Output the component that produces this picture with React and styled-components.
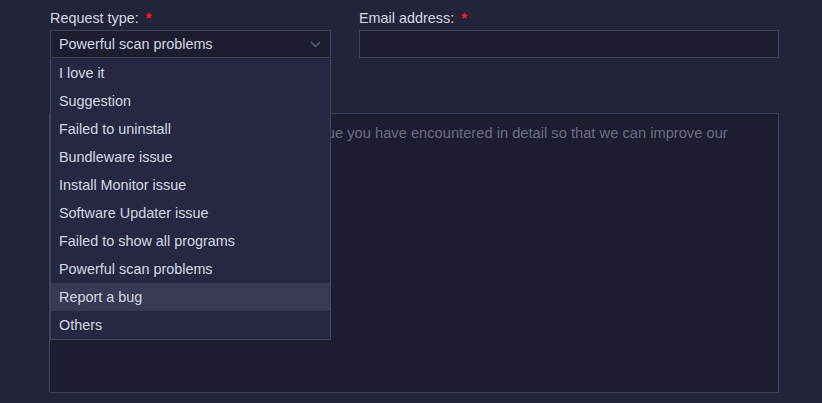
import React from "react";
import styled, { createGlobalStyle } from "styled-components";

const COLORS = {
  page: "#222439",
  field: "#1c1d2f",
  border: "#3e4059",
  menu: "#262843",
  menuBorder: "#44465f",
  hover: "#383a55",
  text: "#d6d8e2",
  placeholder: "#6c6e82",
  chevron: "#5f6278",
  required: "#ff1a1a",
};

const OPTIONS = [
  "I love it",
  "Suggestion",
  "Failed to uninstall",
  "Bundleware issue",
  "Install Monitor issue",
  "Software Updater issue",
  "Failed to show all programs",
  "Powerful scan problems",
  "Report a bug",
  "Others",
];

const GlobalStyle = createGlobalStyle`
  html, body {
    margin: 0;
    background: ${COLORS.page};
    font-family: "Liberation Sans", "DejaVu Sans", sans-serif;
    font-size: 14.4px;
    color: ${COLORS.text};
  }
`;

const Page = styled.div({
  width: 822,
  height: 403,
  overflow: "hidden",
  boxSizing: "border-box",
  padding: "9px 43px 0 49px",
});

const Row = styled.div({
  display: "grid",
  gridTemplateColumns: "281px 420px",
  columnGap: 28,
  paddingLeft: 1,
});

const Field = styled.div({
  position: "relative",
  display: "flex",
  flexDirection: "column",
});

const Label = styled.label`
  display: block;
  height: 18px;
  line-height: 18px;
  margin-bottom: 3px;
  padding-top: ${(p) => p.$offset || 0}px;
  margin-top: ${(p) => -(p.$offset || 0)}px;
  color: ${COLORS.text};
  white-space: nowrap;
`;

const Star = styled.span({
  color: COLORS.required,
  marginLeft: 7,
  fontWeight: 700,
});

const SelectBox = styled.div({
  height: 28,
  boxSizing: "border-box",
  border: `1px solid ${COLORS.border}`,
  background: COLORS.field,
  display: "flex",
  alignItems: "center",
  justifyContent: "space-between",
  padding: "0 9px 0 8px",
  svg: { color: COLORS.chevron },
});

const Input = styled.div({
  height: 28,
  boxSizing: "border-box",
  border: `1px solid ${COLORS.border}`,
  background: COLORS.field,
});

const Menu = styled.ul({
  position: "absolute",
  top: 50,
  left: 0,
  width: 281,
  boxSizing: "border-box",
  margin: 0,
  padding: 0,
  listStyle: "none",
  background: COLORS.menu,
  border: `1px solid ${COLORS.menuBorder}`,
  borderTop: "none",
  zIndex: 2,
});

const Option = styled.li`
  height: 28px;
  line-height: 28px;
  padding: 0 8px;
  background: ${(p) => (p.$active ? COLORS.hover : "transparent")};
  color: ${COLORS.text};
`;

const Message = styled.div({
  marginTop: 55,
  width: 730,
  height: 280,
  boxSizing: "border-box",
  border: `1px solid ${COLORS.border}`,
  background: COLORS.field,
  padding: "9px 9px",
  color: COLORS.placeholder,
  fontSize: 14.7,
  lineHeight: "20px",
});

function Chevron() {
  return (
    <svg width="11" height="7" viewBox="0 0 11 7" fill="none">
      <path d="M1 1 L5.5 5.5 L10 1" stroke="currentColor" strokeWidth="1.5" />
    </svg>
  );
}

export default function App() {
  return (
    <Page>
      <GlobalStyle />
      <Row>
        <Field>
          <Label>
            Request type:<Star>*</Star>
          </Label>
          <SelectBox>
            <span>Powerful scan problems</span>
            <Chevron />
          </SelectBox>
          <Menu>
            {OPTIONS.map((o) => (
              <Option key={o} $active={o === "Report a bug"}>
                {o}
              </Option>
            ))}
          </Menu>
        </Field>
        <Field>
          <Label $offset={2}>
            Email address:<Star>*</Star>
          </Label>
          <Input />
        </Field>
      </Row>
      <Message>
        Please describe the suggestion or the issue you have encountered in
        detail so that we can improve our product.
      </Message>
    </Page>
  );
}
